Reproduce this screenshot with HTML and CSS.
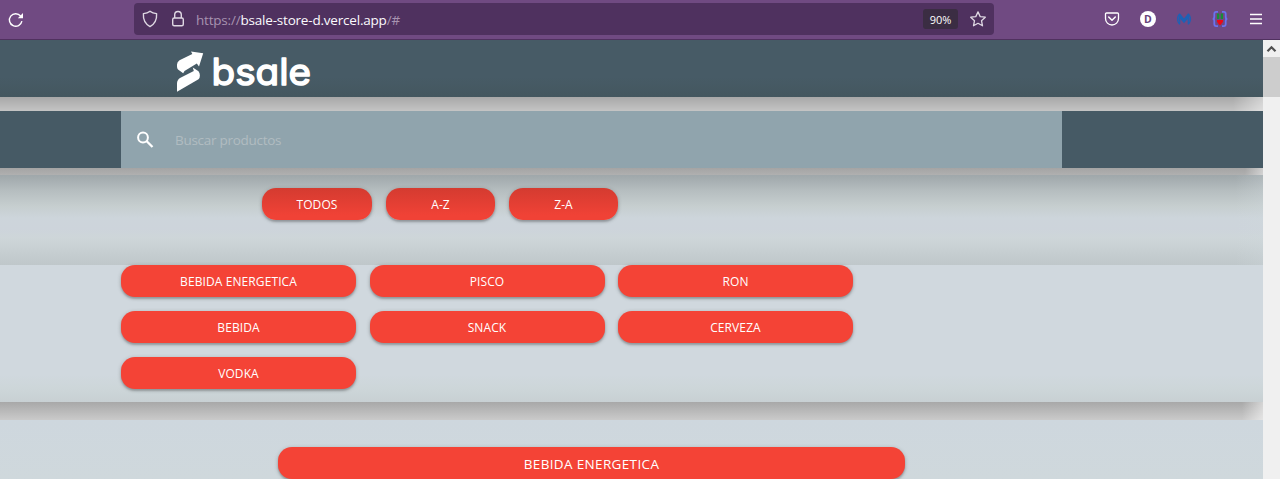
FILE: index.html
```html
<!DOCTYPE html>
<html lang="es">
<head>
<meta charset="utf-8">
<title>Bsale store</title>
<link rel="stylesheet" href="styles.css">
</head>
<body>
<div class="toolbar">
  <svg class="reload" width="16" height="16" viewBox="0 0 16 16"><path d="M13.9 9.2A6.3 6.3 0 1 1 12.6 4" fill="none" stroke="#fff" stroke-width="1.4"/><path d="M15 1v5.2H9.8z" fill="#fff"/></svg>
  <div class="address">
    <svg class="shield" width="16" height="18" viewBox="0 0 16 18"><path d="M8 1.2Q10.5 3.4 14.6 3.6C15 9.5 12.6 14 8 16.6 3.4 14 1 9.5 1.4 3.6Q5.500 3.400 8 1.200z" fill="none" stroke="#dfd8e3" stroke-width="1.4" stroke-linejoin="round"/></svg>
    <svg class="lock" width="14" height="18" viewBox="0 0 14 18"><rect x="1.700" y="8" width="10.600" height="7.800" rx="1.500" fill="none" stroke="#dfd8e3" stroke-width="1.400"/><path d="M3.700 8V4.800a3.300 3.300 0 0 1 6.600 0V8" fill="none" stroke="#dfd8e3" stroke-width="1.400"/></svg>
    <div class="url">https://<span class="host">bsale-store-d.vercel.app</span>/#</div>
    <div class="zoom">90%</div>
    <svg class="star" width="18" height="18" viewBox="0 0 18 18"><path d="M9 1.900l2.200 4.700 5.100.6-3.800 3.500 1 5.100L9 13.300l-4.500 2.500 1-5.100L1.700 7.200l5.100-.6z" fill="none" stroke="#dfd8e3" stroke-width="1.300" stroke-linejoin="round"/></svg>
  </div>
  <div class="extensions">
    <svg width="16" height="16" viewBox="0 0 16 16"><path d="M2.500 2h11a1 1 0 0 1 1 1v4.500a6.500 6.500 0 0 1-13 0V3a1 1 0 0 1 1-1z" fill="none" stroke="#fff" stroke-width="1.300"/><path d="M4.700 6L8 9.200 11.300 6" fill="none" stroke="#fff" stroke-width="1.500" stroke-linecap="round" stroke-linejoin="round"/></svg>
    <div class="account">D</div>
    <svg width="16" height="16" viewBox="0 0 16 16"><path d="M3.800 2.200C.2 4.600-.1 10.500 3.400 13.800L4.300 13V8L8 12.200 11.700 8v5l.9.8c3.500-3.300 3.200-9.200-.4-11.600L8 7.600z" fill="#1d61b5"/><path d="M2.600 5.500Q1.600 8.500 3 11M13.400 5.500Q14.400 8.500 13 11" fill="none" stroke="#704a82" stroke-width=".5"/></svg>
    <svg width="16" height="16" viewBox="0 0 16 16"><path d="M6 .9H4.200Q2.300.9 2.300 3v2.700Q2.300 8 .7 8q1.600 0 1.600 2.300V13q0 2.100 1.900 2.100H6M10 .9h1.800q1.900 0 1.900 2.100v2.700q0 2.300 1.600 2.300-1.600 0-1.600 2.300V13q0 2.100-1.900 2.100H10" fill="none" stroke="#6a72ef" stroke-width="1.800"/><path d="M5 2.500h2.300V8H5zM8.700 2.500H11V8H8.700z" fill="#168f35"/><path d="M5 9h6v1.800L8.600 14H7.400L5 10.800z" fill="#f00712"/></svg>
    <svg width="16" height="16" viewBox="0 0 16 16"><path d="M2 3.500h12M2 8h12M2 12.500h12" stroke="#fff" stroke-width="1.300"/></svg>
  </div>
</div>
<div class="viewport">
  <main class="page">
    <header class="header">
      <svg class="logo" width="140" height="46" viewBox="0 0 140 46">
        <path d="M17 2.500L29.200 4.200 25 17.500l-2.200-3L10.500 22l-1.300 2.200L4 20.500Q3 19.300 3 17.500V15.500Q3 13 5.500 11.300L18.300 5z" fill="#fff"/>
        <path d="M18.800 18.500L24.500 22.200Q25.900 24 25.900 26.500T24.500 30.300L3 42.700V34.500Q3 31 6 29L19.800 22z" fill="#fff"/>
        <text class="wordmark" x="37.500" y="36" textLength="99.500" lengthAdjust="spacingAndGlyphs">bsale</text>
      </svg>
    </header>
    <div class="shade shade-header"></div>
    <nav class="nav">
      <div class="search">
        <svg width="18" height="18" viewBox="0 0 18 18"><circle cx="7" cy="6.500" r="4.900" fill="none" stroke="#fff" stroke-width="2"/><path d="M10.500 10l6 6" stroke="#fff" stroke-width="2.300"/></svg>
        <span class="placeholder">Buscar productos</span>
      </div>
    </nav>
    <div class="shade shade-nav"></div>
    <section class="sort">
      <a class="btn">TODOS</a><a class="btn">A-Z</a><a class="btn">Z-A</a>
    </section>
    <section class="categories">
      <a class="btn">BEBIDA ENERGETICA</a><a class="btn">PISCO</a><a class="btn">RON</a>
      <a class="btn">BEBIDA</a><a class="btn">SNACK</a><a class="btn">CERVEZA</a>
      <a class="btn">VODKA</a>
    </section>
    <div class="shade shade-categories"></div>
    <section class="products">
      <div class="btn title">BEBIDA ENERGETICA</div>
    </section>
  </main>
  <div class="scrollbar">
    <div class="arrow"><svg width="11" height="8" viewBox="0 0 11 8"><path d="M1.500 6.300l4-4 4 4" fill="none" stroke="#505050" stroke-width="2.200"/></svg></div>
    <div class="thumb"></div>
  </div>
</div>
</body>
</html>
```
FILE: styles.css
```css
* { box-sizing: border-box; }
body { margin: 0; width: 1280px; height: 479px; overflow: hidden; font-family: "Open Sans", "Noto Sans", sans-serif; background: #fff; }
svg { display: block; flex: none; }

.toolbar { display: flex; height: 40px; background: #704a82; border-bottom: 1px solid #50315f; }
.reload { margin: 12px 0 0 8px; }
.address { display: flex; align-items: center; width: 860px; height: 32px; margin: 3px 0 0 110px; padding-left: 8px; border-radius: 4px; background: #4f315f; }
.lock { margin-left: 13px; }
.url { width: 727px; margin-left: 11px; font-size: 13.500px; line-height: 20px; letter-spacing: -.2px; color: #a793b0; white-space: nowrap; padding-top: 2px; }
.host { color: #fbfafe; }
.zoom { flex: none; width: 35px; height: 20px; border-radius: 3px; background: #3b2d43; color: #fff; font-size: 11px; line-height: 21px; text-align: center; }
.star { margin-left: 11px; }
.extensions { display: flex; align-items: center; gap: 20px; height: 38px; margin-left: 110px; }
.account { width: 16px; height: 16px; border-radius: 8px; background: #fff; color: #68437a; font: bold 10.500px/16px "Open Sans", sans-serif; text-align: center; }

.viewport { display: flex; height: 439px; }
.page { width: 1263px; }
.header { height: 57px; padding: 9px 0 0 174px; background: linear-gradient(#475b66 65%, #44575f); }
.wordmark { font: 400 37px Inter, sans-serif; font-feature-settings: "cv11" 1; fill: #fff; stroke: #fff; stroke-width: 1.500px; stroke-linejoin: round; }

.shade { background: linear-gradient(90deg, rgba(255, 255, 255, 0) 1233px, rgba(255, 255, 255, .45) 1263px), linear-gradient(#a8a8a8, #c4c4c4); }
.shade-header { height: 14px; }
.shade-nav { height: 7px; background: linear-gradient(90deg, rgba(255, 255, 255, 0) 1245px, rgba(255, 255, 255, .45) 1263px), linear-gradient(#a4a4a4, #b0b0b0); }
.shade-categories { height: 18px; background: linear-gradient(90deg, rgba(255, 255, 255, 0) 1242px, rgba(255, 255, 255, .5) 1263px), linear-gradient(#a8a8a8, #cacaca); }

.nav { height: 57px; padding-left: 121px; background: #465a65; }
.search { display: flex; align-items: center; width: 941px; height: 57px; padding-left: 15px; background: #90a4ad; }
.placeholder { margin-left: 21px; font-size: 13.500px; letter-spacing: -.28px; color: #b0bcc1; }

.btn { display: block; height: 32px; border-radius: 14px; background: #f44336; color: #fff; font-size: 12px; line-height: 33px; letter-spacing: .1px; text-align: center; box-shadow: 0 2px 2px rgba(0, 0, 0, .18), 0 1px 4px rgba(0, 0, 0, .22); }
.sort { display: grid; grid-template-columns: 110px 109px 109px; column-gap: 14px; height: 90px; padding: 13px 0 0 262px; background: linear-gradient(90deg, rgba(207, 216, 220, 0) 1235px, rgba(207, 216, 220, .3)), linear-gradient(#9fa7aa 0, #b6bec0 16px, #c6cecf 31px, #cdd5db 43px, #cdd4db 54px, #ced6d9 63px, #bfc7ca 90px); }
.sort .btn { background: linear-gradient(#d43b30, #f04236 85%); }
.categories { display: grid; grid-template-columns: repeat(3, 235px); gap: 14px 13.500px; align-content: start; height: 137px; padding-left: 121px; background: linear-gradient(#d0d8de 80%, #cdd6d9 90%, #c8d0d3); }
.products { height: 59px; padding: 27px 0 0 278px; background: linear-gradient(#ced7de, #cfd8dc); }
.title { width: 627px; font-size: 13.500px; line-height: 35px; letter-spacing: .35px; }

.scrollbar { width: 17px; background: #f0f0f0; }
.arrow { display: flex; align-items: center; justify-content: center; height: 17px; }
.thumb { height: 40px; background: #cdcdcd; }
```
